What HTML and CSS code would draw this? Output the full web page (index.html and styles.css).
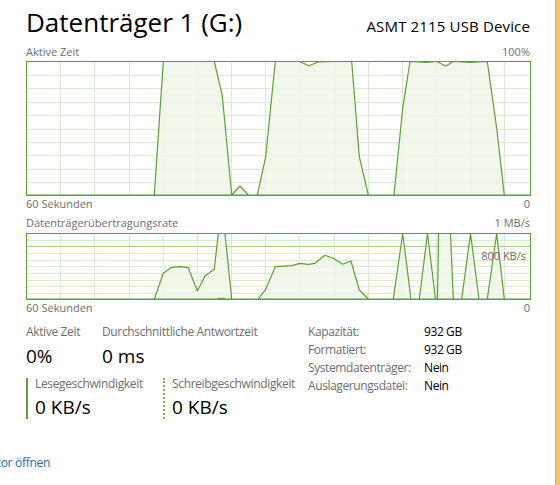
FILE: index.html
```html
<!DOCTYPE html>
<html lang="de">
<head>
<meta charset="utf-8">
<title>Datenträger 1 (G:)</title>
<link rel="stylesheet" href="styles.css">
</head>
<body>
<div class="main">
  <div class="content">
    <div class="header">
      <div class="title">Datenträger 1 (G:)</div>
      <div class="device">ASMT 2115 USB Device</div>
    </div>

    <div class="label-row top-label">
      <span>Aktive Zeit</span>
      <span>100%</span>
    </div>
    <svg class="chart chart-active" width="505" height="135" viewBox="26 61 505 135">
      <g class="grid">
        <path d="M60.5 61V195M94.5 61V195M129.5 61V195M163.5 61V195M197.5 61V195M231.5 61V195M265.5 61V195M299.5 61V195M334.5 61V195M368.5 61V195M402.5 61V195M436.5 61V195M470.5 61V195M504.5 61V195"/>
        <path d="M26 75.5H530M26 88.5H530M26 102.5H530M26 115.5H530M26 129.5H530M26 142.5H530M26 155.5H530M26 169.5H530M26 182.5H530"/>
      </g>
      <path class="area" d="M26.5,195 L154.3,195 L163.3,61.5 L214.3,61.5 L222.3,95.7 L231.7,195 L240,186 L248.3,195 L257.3,195 L265.7,156.7 L275.3,61.5 L299.3,61.5 L309,65.7 L318,62 L333.3,61.5 L351.7,61.5 L359.3,156.7 L368.3,195 L394,195 L402.7,108.3 L410,61.5 L426.7,62.5 L436.7,61.5 L445.7,66 L453.3,61.5 L470,62.5 L487.3,61.5 L496.7,128.3 L504.3,195 L530,195 Z"/>
      <rect class="frame" x="26.5" y="61.5" width="504" height="134"/>
    </svg>
    <div class="label-row axis-label">
      <span>60 Sekunden</span>
      <span>0</span>
    </div>

    <div class="label-row top-label second">
      <span>Datenträgerübertragungsrate</span>
      <span>1 MB/s</span>
    </div>
    <div class="chart-wrap">
      <svg class="chart chart-rate" width="505" height="67" viewBox="26 233 505 67">
        <g class="grid">
          <path d="M60.5 233V299M94.5 233V299M129.5 233V299M163.5 233V299M197.5 233V299M231.5 233V299M265.5 233V299M299.5 233V299M334.5 233V299M368.5 233V299M402.5 233V299M436.5 233V299M470.5 233V299M504.5 233V299"/>
          <path d="M26 240.5H530M26 253.5H530M26 260.5H530M26 266.5H530M26 273.5H530M26 280.5H530M26 286.5H530M26 293.5H530"/>
        </g>
        <path class="scale-line" d="M26 246.5H530"/>
        <path class="area" d="M26.5,299 L154.3,299 L163.3,273.3 L171.7,267.3 L180,266.7 L188.3,267.7 L197.3,291 L205,276 L214.3,269.3 L218.3,233.5 L225,233.5 L231.7,299 L258.3,299 L265.7,289.3 L275.3,266.7 L291.7,265.7 L300,263.3 L308.3,264.3 L315,263.3 L325,255.3 L333.3,258.3 L342.7,264.3 L351,261 L359.3,290 L368.3,299 L393.3,299 L402.7,233.5 L411,299 L419.3,299 L427.5,233.5 L435.5,299 L437.5,299 L438.6,233.5 L450.5,233.5 L453.3,299 L461.7,299 L470.5,233.5 L479,299 L487.3,299 L496.7,233.5 L504.3,299 L530,299 Z"/>
        <path class="write-line" d="M218 298.3H225"/>
        <rect class="frame" x="26.5" y="233.5" width="504" height="66"/>
      </svg>
      <span class="scale-label">800 KB/s</span>
    </div>
    <div class="label-row axis-label">
      <span>60 Sekunden</span>
      <span>0</span>
    </div>

    <div class="stats">
      <div class="stats-left">
        <div class="stat-row">
          <div class="stat stat-active">
            <div class="stat-label">Aktive Zeit</div>
            <div class="stat-value">0%</div>
          </div>
          <div class="stat">
            <div class="stat-label">Durchschnittliche Antwortzeit</div>
            <div class="stat-value">0 ms</div>
          </div>
        </div>
        <div class="stat-row speeds">
          <div class="speed speed-read">
            <div class="speed-label">Lesegeschwindigkeit</div>
            <div class="stat-value">0 KB/s</div>
          </div>
          <div class="speed speed-write">
            <div class="speed-label">Schreibgeschwindigkeit</div>
            <div class="stat-value">0 KB/s</div>
          </div>
        </div>
      </div>
      <div class="props">
        <span class="prop-key">Kapazität:</span><span class="prop-val">932 GB</span>
        <span class="prop-key">Formatiert:</span><span class="prop-val">932 GB</span>
        <span class="prop-key">Systemdatenträger:</span><span class="prop-val">Nein</span>
        <span class="prop-key">Auslagerungsdatei:</span><span class="prop-val">Nein</span>
      </div>
    </div>
  </div>
  <div class="link-wrap"><a class="link" href="#">Ressourcenmonitor öffnen</a></div>
</div>
<div class="edge"></div>
</body>
</html>
```

FILE: styles.css
```css
html, body {
  margin: 0;
  padding: 0;
}

body {
  width: 560px;
  height: 485px;
  overflow: hidden;
  display: flex;
  background: #ffffff;
  color: #000000;
  font-family: "Open Sans", "Noto Sans", "Liberation Sans", sans-serif;
}

.main {
  width: 555px;
  flex: none;
  box-sizing: border-box;
  padding-left: 26px;
  position: relative;
}

.content {
  width: 505px;
}

.edge {
  flex: 1;
  box-sizing: border-box;
  background: #f0c96e;
  border-left: 1px solid #d6ad55;
}

.header {
  display: flex;
  justify-content: space-between;
  align-items: baseline;
  padding-top: 7px;
  height: 30px;
  padding-right: 1px;
}

.title {
  font-size: 26px;
  line-height: 30px;
  letter-spacing: 0;
}

.device {
  font-size: 15px;
  line-height: 20px;
  letter-spacing: 0.15px;
}

.label-row {
  display: flex;
  justify-content: space-between;
  font-size: 11px;
  line-height: 14px;
  color: #6e6e6e;
  padding-right: 1px;
}

.top-label {
  margin-top: 8px;
}

.top-label.second {
  margin-top: 5px;
}

.axis-label {
  margin-top: 1px;
}

.chart {
  display: block;
  margin-top: 2px;
}

.chart-wrap .chart {
  margin-top: 3px;
}

.chart .grid path {
  fill: none;
  stroke: #d9eacd;
  stroke-width: 1;
}

.chart .scale-line {
  fill: none;
  stroke: #a9cd8f;
  stroke-width: 1;
}

.chart .area {
  fill: #eef6e7;
  fill-opacity: 0.85;
  stroke: #5f9e37;
  stroke-width: 1.2;
  stroke-linejoin: round;
}

.chart .write-line {
  stroke: #5f9e37;
  stroke-width: 1;
}

.chart .frame {
  fill: none;
  stroke: #5f9e37;
  stroke-width: 1;
}

.chart-wrap {
  position: relative;
}

.scale-label {
  position: absolute;
  right: 5px;
  top: 16px;
  font-size: 11px;
  line-height: 14px;
  color: #6e6e6e;
}

.stats {
  display: flex;
  align-items: flex-start;
  margin-top: 8px;
}

.stats-left {
  width: 282px;
  padding-top: 1px;
}

.stat-row {
  display: flex;
}

.stat-active {
  width: 76px;
}

.stat-label {
  font-size: 12px;
  line-height: 16px;
  letter-spacing: -0.35px;
  color: #6e6e6e;
  margin-bottom: 4px;
}

.stat-value {
  font-size: 19px;
  line-height: 24px;
}

.speeds {
  margin-top: 10px;
}

.speed {
  padding-left: 7px;
  height: 41px;
}

.speed-read {
  width: 128px;
  border-left: 2px solid #5f9e37;
}

.speed-write {
  border-left: 2px dotted #7cb450;
}

.speed-label {
  font-size: 12px;
  line-height: 12px;
  letter-spacing: -0.35px;
  color: #6e6e6e;
  margin-bottom: 5px;
}

.props {
  display: grid;
  grid-template-columns: 116px auto;
  align-content: start;
  font-size: 12px;
  line-height: 18px;
  letter-spacing: -0.4px;
}

.prop-key {
  color: #6e6e6e;
}

.prop-val {
  color: #000000;
}

.link-wrap {
  width: 50px;
  margin-left: -26px;
  margin-top: 36px;
  display: flex;
  justify-content: flex-end;
  white-space: nowrap;
}

.link {
  font-size: 12px;
  line-height: 16px;
  letter-spacing: -0.3px;
  color: #1c6bbf;
  text-decoration: none;
}
```
